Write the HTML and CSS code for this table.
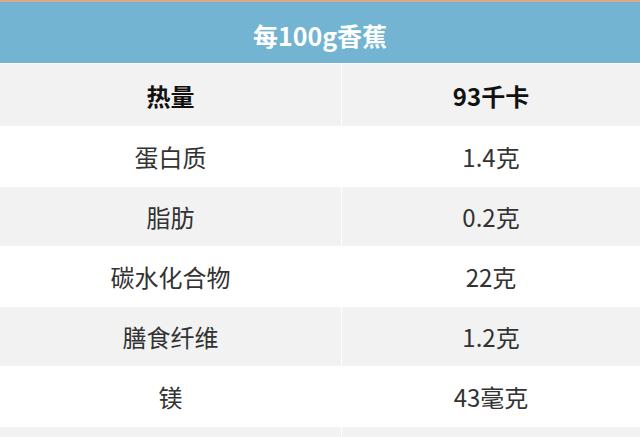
FILE: index.html
```html
<!DOCTYPE html>
<html lang="zh-CN">
<head>
<meta charset="utf-8">
<link rel="stylesheet" href="styles.css">
</head>
<body>
<div class="sheet">
  <div class="title">每100g香蕉</div>
  <div class="row gray head">
    <div class="cell">热量</div>
    <div class="cell">93千卡</div>
  </div>
  <div class="row">
    <div class="cell">蛋白质</div>
    <div class="cell">1.4克</div>
  </div>
  <div class="row gray">
    <div class="cell">脂肪</div>
    <div class="cell">0.2克</div>
  </div>
  <div class="row">
    <div class="cell">碳水化合物</div>
    <div class="cell">22克</div>
  </div>
  <div class="row gray">
    <div class="cell">膳食纤维</div>
    <div class="cell">1.2克</div>
  </div>
  <div class="row">
    <div class="cell">镁</div>
    <div class="cell">43毫克</div>
  </div>
  <div class="row gray">
    <div class="cell"></div>
    <div class="cell"></div>
  </div>
</div>
</body>
</html>
```

FILE: styles.css
```css
html, body {
  margin: 0;
  padding: 0;
  background: #ffffff;
  overflow: hidden;
}
.sheet {
  width: 640px;
  height: 437px;
  overflow: hidden;
  display: flex;
  flex-direction: column;
  gap: 1px;
  font-family: "Noto Sans CJK SC", "Noto Sans", sans-serif;
}
.title {
  flex-shrink: 0;
  height: 63px;
  box-sizing: border-box;
  border-top: 2px solid #dfa68a;
  padding-top: 4px;
  background: #72b4d1;
  color: #ffffff;
  font-size: 25px;
  font-weight: 700;
  display: flex;
  align-items: center;
  justify-content: center;
}
.row {
  flex-shrink: 0;
  display: grid;
  grid-template-columns: 341px 1fr;
  column-gap: 1px;
  height: 59px;
}
.row.head {
  height: 62px;
}
.cell {
  display: flex;
  align-items: center;
  justify-content: center;
  font-size: 24px;
  color: #333333;
}
.row.gray .cell {
  background: #f2f2f2;
}
.row.head .cell {
  font-weight: 700;
  color: #111111;
}
```
